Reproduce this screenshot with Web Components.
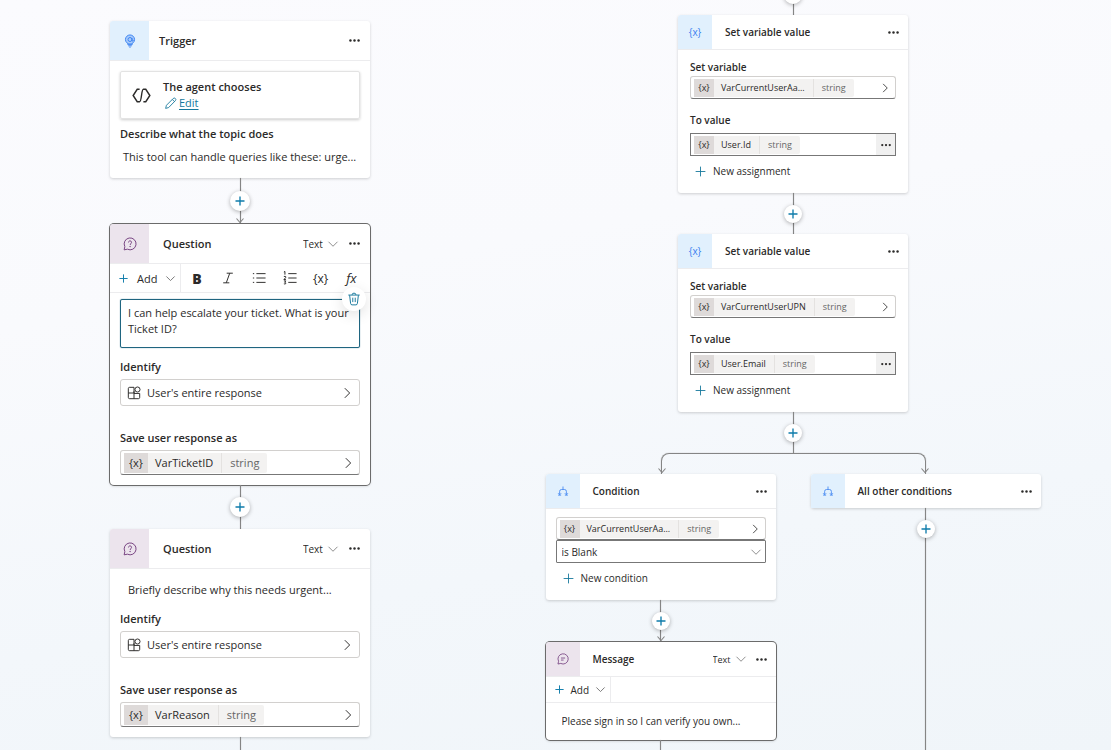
<!DOCTYPE html>
<html lang="en">
<head>
<meta charset="utf-8">
<title>Topic flow</title>
<style>
	body {
		margin: 0;
		font-family: "Open Sans", "Noto Sans", sans-serif;
		color: #2b2a29;
	}
</style>
</head>
<body>
<flow-canvas>
	<flow-lane>
		<flow-card icon="trigger" heading="Trigger">
			<agent-choice></agent-choice>
			<flow-note label="Describe what the topic does">This tool can handle queries like these: urge...</flow-note>
		</flow-card>
		<flow-connector arrow></flow-connector>
		<flow-card icon="question" heading="Question" mode="Text" tone="purple" selected>
			<format-bar slot="bar" full></format-bar>
			<message-editor text="I can help escalate your ticket. What is your Ticket ID?"></message-editor>
			<picker-field label="Identify" value="User's entire response"></picker-field>
			<variable-field label="Save user response as" name="VarTicketID" class="spaced"></variable-field>
		</flow-card>
		<flow-connector></flow-connector>
		<flow-card icon="question" heading="Question" mode="Text" tone="purple">
			<flow-note indent>Briefly describe why this needs urgent...</flow-note>
			<picker-field label="Identify" value="User's entire response"></picker-field>
			<variable-field label="Save user response as" name="VarReason" class="spaced"></variable-field>
		</flow-card>
		<flow-connector tail></flow-connector>
	</flow-lane>

	<flow-lane compact>
		<flow-connector class="cut"></flow-connector>
		<flow-card icon="variable" heading="Set variable value">
			<variable-field label="Set variable" name="VarCurrentUserAa..."></variable-field>
			<variable-field label="To value" name="User.Id" more></variable-field>
			<add-link text="New assignment"></add-link>
		</flow-card>
		<flow-connector></flow-connector>
		<flow-card icon="variable" heading="Set variable value">
			<variable-field label="Set variable" name="VarCurrentUserUPN"></variable-field>
			<variable-field label="To value" name="User.Email" more></variable-field>
			<add-link text="New assignment"></add-link>
		</flow-card>
		<flow-connector></flow-connector>
		<flow-branch>
			<flow-card slot="left" icon="branch" heading="Condition">
				<condition-row name="VarCurrentUserAa..." test="is Blank"></condition-row>
				<add-link text="New condition"></add-link>
			</flow-card>
			<flow-connector slot="left" arrow></flow-connector>
			<flow-card slot="left" icon="message" heading="Message" mode="Text" tone="purple" selected>
				<format-bar slot="bar"></format-bar>
				<flow-note indent>Please sign in so I can verify you own...</flow-note>
			</flow-card>
			<flow-connector slot="left" tail></flow-connector>
			<flow-card slot="right" icon="branch" heading="All other conditions" bare></flow-card>
			<flow-connector slot="right"></flow-connector>
			<flow-connector slot="right" tail></flow-connector>
		</flow-branch>
	</flow-lane>
</flow-canvas>

<script>
// Line icons, all stroked with currentColor
const ICONS = {
	trigger: `<svg viewBox="0 0 16 16"><circle cx="8" cy="6.3" r="5.2" fill="#a9ccfb"/><circle cx="8" cy="6.3" r="2.3"/><path d="M10.3 4.5v2.8c0 1.2 1.6 1 1.6-.6M5.500 11v1.200h5V11M6 13.500h4M7.2 15h1.6"/></svg>`,
	question: `<svg viewBox="0 0 16 16"><path d="M1.300 14.700l.8-3.700A6.800 6.800 0 1 1 5 13.900z"/><path d="M6.300 6.200c0-2.400 3.500-2.300 3.500-.1 0 1.400-1.700 1.500-1.700 3"/><circle cx="8.1" cy="10.900" r=".35"/></svg>`,
	message: `<svg viewBox="0 0 16 16"><path d="M1.300 14.700l.8-3.700A6.800 6.800 0 1 1 5 13.900z"/><path d="M5.300 6.700h5.500M5.300 9.400h3.500"/></svg>`,
	branch: `<svg viewBox="0 0 16 16"><path d="M8 2v3.500M3.500 12.500V8.500q0-2.500 2.500-2.500h4q2.500 0 2.500 2.500v4M1.500 11l2 2 2-2M10.500 11l2 2 2-2M1.500 13.500h4M10.500 13.500h4"/></svg>`,
	agent: `<svg viewBox="0 0 20 20"><path d="M8 3.500H5.500L1.200 10l4.300 6.500H8M12 3.500h2.500l4.300 6.500-4.300 6.500H12M8 16.500c2.300 0 1.700-13 4-13"/></svg>`,
	pencil: `<svg viewBox="0 0 16 16"><path d="M2 14l1-3.800 8.300-8.300a1.700 1.700 0 0 1 2.700 2.600L5.700 13zM10.200 3l2.700 2.700"/></svg>`,
	plus: `<svg viewBox="0 0 16 16"><path d="M8 2v12M2 8h12"/></svg>`,
	right: `<svg viewBox="0 0 16 16"><path d="M5.500 2.500L11 8l-5.500 5.500"/></svg>`,
	down: `<svg viewBox="0 0 16 16"><path d="M2 5l6 6 6-6"/></svg>`,
	dots: `<svg viewBox="0 0 16 16" class="solid"><circle cx="3" cy="8" r="1.500"/><circle cx="8" cy="8" r="1.500"/><circle cx="13" cy="8" r="1.500"/></svg>`,
	grid: `<svg viewBox="0 0 16 16"><path d="M8 14.500V8H1.500M8 8V1.500H3q-1.500 0-1.500 1.500v10q0 1.500 1.500 1.500h10q1.500 0 1.500-1.500V8.500H8M8 8V6"/><circle cx="12" cy="4" r="2.900"/></svg>`,
	italic: `<svg viewBox="0 0 16 16"><path d="M6.500 2.500h7M2.500 13.500h7M10 2.500l-4 11"/></svg>`,
	bullets: `<svg viewBox="0 0 16 16"><path d="M5 3h10.500M5 8h10.500M5 13h10.500M1 3h1.500M1 8h1.500M1 13h1.500"/></svg>`,
	numbers: `<svg viewBox="0 0 16 16"><path d="M6 3h9.500M6 8h9.500M6 13h9.500M1 1.200l1.200-.7v3.700M1 6.200h2v1.500l-2 2h2.300M1 11.300h2.200l-1.200 1.700q1.500.2 1.200 1.400-.8.900-2.200.2"/></svg>`,
	trash: `<svg viewBox="0 0 16 16"><path d="M1.500 3.500h13M5.800 3.300q0-2 2.200-2t2.200 2M3 3.700l1.100 9.300q.2 1.700 1.700 1.700h4.400q1.500 0 1.700-1.700L13 3.700M6.600 6.500v5M9.400 6.500v5"/></svg>`,
	arrow: `<svg viewBox="0 0 8 5"><path d="M.5.500L4 4.500 7.500.500"/></svg>`
};

const BASE = `
	:host { display: block; box-sizing: border-box; }
	*, *::before { box-sizing: border-box; }
	svg { display: block; flex: none; width: 14px; height: 14px; fill: none; stroke: currentColor; stroke-width: 1.1; }
	svg.solid { fill: currentColor; stroke: none; }
	button, select, textarea { margin: 0; padding: 0; border: 0; background: none; color: inherit; font: inherit; }
	button { display: flex; align-items: center; justify-content: center; cursor: pointer; }
	p { margin: 0; }
	.label { display: block; font-size: var(--text); line-height: var(--line); font-weight: 600; }
`;

class FlowElement extends HTMLElement {
	connectedCallback() {
		if (this.shadowRoot) return;
		const root = this.attachShadow({ mode: 'open' });
		root.innerHTML = `<style>${BASE}${this.styles()}</style>${this.markup()}`;
	}
	attr(name) {
		return this.getAttribute(name) || '';
	}
}

customElements.define('flow-canvas', class extends FlowElement {
	styles() {
		return `
		:host {
			display: grid;
			grid-template-columns: 480fr 626fr;
			height: 100vh;
			padding-right: 5px;
			overflow: hidden;
			background: linear-gradient(170deg, #fbfbfe 0%, #f9fafd 35%, #f3f7fb 70%, #f0f5f9 100%);
		}`;
	}
	markup() {
		return `<slot></slot>`;
	}
});

// Sizes for everything in a lane are set here and inherited by its cards
customElements.define('flow-lane', class extends FlowElement {
	styles() {
		return `
		:host {
			--text: 11px; --small: 10px; --chip-text: 11px; --line: 16px; --tile: 39px; --card: 260px;
			--inset: 10px; --bottom: 10px; --link: 44px; --arrow-link: 46px; --knob: 20px; --chip: 24px; --row: 25px;
			--gap: 4px; --icon: 14px; --bar: 28px; --bar-gap: 8px; --title: 14px; --end: 9px; --note: 3px 0 2px 8px;
			display: flex;
			flex-direction: column;
			align-items: center;
			min-height: 0;
			padding-top: 21px;
		}
		:host([compact]) {
			--text: 10px; --small: 9px; --chip-text: 9px; --line: 14px; --tile: 34px; --card: 230px;
			--inset: 12px; --bottom: 11px; --link: 41px; --arrow-link: 42px; --knob: 18px; --chip: 20px; --row: 23px;
			--gap: 2px; --icon: 12px; --bar: 25px; --bar-gap: 6px; --title: 13px; --end: 8px; --note: 1px 0 1px 4px;
			padding-top: 0;
		}
		::slotted(flow-card) { width: var(--card); }
		::slotted(.cut) { margin-top: -26px; }`;
	}
	markup() {
		return `<slot></slot>`;
	}
});

customElements.define('flow-card', class extends FlowElement {
	styles() {
		return `
		:host {
			flex: none;
			border-radius: 3px;
			background: #fff;
			box-shadow: 0 1px 3px rgba(0, 0, 0, .18);
		}
		:host([selected]) { box-shadow: 0 0 0 1px #6b6b6b, 0 1px 3px rgba(0, 0, 0, .2); border-radius: 4px; }
		header {
			display: flex;
			align-items: center;
			border-bottom: 1px solid #ececee;
			padding-right: var(--end);
		}
		:host([bare]) header { border: 0; }
		.tile {
			display: flex;
			align-items: center;
			justify-content: center;
			width: var(--tile);
			height: var(--tile);
			border-radius: 3px 0 0 0;
			background: #e1f0fd;
			color: #3b82f0;
			font-size: var(--text);
		}
		:host([tone=purple]) .tile { background: #ece4ed; color: #75407f; }
		.tile svg { width: var(--icon); height: var(--icon); }
		h2 { flex: 1; margin: 0 0 0 var(--title); font-size: var(--text); line-height: var(--line); font-weight: 600; }
		:host([icon=trigger]) h2 { margin-left: 10px; }
		.mode { display: grid; align-items: center; margin-right: var(--end); font-size: var(--small); }
		.mode select { grid-area: 1 / 1; appearance: none; padding-right: 16px; }
		.mode svg { grid-area: 1 / 1; justify-self: end; width: 12px; height: 12px; color: #777; pointer-events: none; }
		.dots svg { width: 13px; height: 13px; }
		.body { display: flex; flex-direction: column; padding: 10px var(--inset) var(--bottom); }
		:host([bare]) .body { display: none; }`;
	}
	markup() {
		const icon = this.attr('icon');
		const mode = this.attr('mode');
		return `
		<header>
			<span class="tile">${ICONS[icon] || '{x}'}</span>
			<h2>${this.attr('heading')}</h2>
			${mode ? `<span class="mode"><select aria-label="Response type"><option>${mode}</option></select>${ICONS.down}</span>` : ''}
			<button class="dots" aria-label="More options">${ICONS.dots}</button>
		</header>
		<slot name="bar"></slot>
		<div class="body"><slot></slot></div>`;
	}
});

customElements.define('flow-connector', class extends FlowElement {
	styles() {
		return `
		:host { display: grid; flex: none; justify-items: center; align-items: center; height: var(--link); color: #858585; }
		:host([arrow]) { height: var(--arrow-link); }
		:host([tail]) { flex: 1; height: auto; min-height: 0; }
		.line { grid-area: 1 / 1; align-self: stretch; width: 1px; background: currentColor; box-shadow: 0 0 1px #999; }
		.head { grid-area: 1 / 1; align-self: end; }
		.head svg { width: 8px; height: 5px; margin-bottom: 1px; }
		.knob {
			grid-area: 1 / 1;
			z-index: 1;
			width: var(--knob);
			height: var(--knob);
			border-radius: 50%;
			background: #fff;
			color: #0f7cab;
			box-shadow: 0 1px 4px rgba(0, 0, 0, .3);
		}
		.knob svg { width: 12px; height: 12px; stroke-width: 1.8; }`;
	}
	markup() {
		const knob = this.hasAttribute('tail') ? '' : `<button class="knob" aria-label="Add node">${ICONS.plus}</button>`;
		const head = this.hasAttribute('arrow') ? `<span class="head">${ICONS.arrow}</span>` : '';
		return `<span class="line"></span>${head}${knob}`;
	}
});

customElements.define('flow-branch', class extends FlowElement {
	styles() {
		return `
		:host { display: flex; flex-direction: column; flex: 1; min-height: 0; }
		.rail {
			display: flex;
			flex: none;
			justify-content: space-between;
			align-items: flex-end;
			height: 21px;
			margin: 0 calc(var(--card) / 2);
			border: 1px solid #858585;
			border-bottom: 0;
			border-radius: 8px 8px 0 0;
			color: #858585;
			box-shadow: 0 0 1px #999;
			clip-path: inset(-2px -6px 0);
		}
		.rail svg { width: 8px; height: 5px; margin: 0 -4px 1px; }
		.arms { display: flex; flex: 1; gap: 35px; min-height: 0; }
		.arm { display: flex; flex-direction: column; width: var(--card); }`;
	}
	markup() {
		return `
		<div class="rail">${ICONS.arrow}${ICONS.arrow}</div>
		<div class="arms">
			<div class="arm"><slot name="left"></slot></div>
			<div class="arm"><slot name="right"></slot></div>
		</div>`;
	}
});

customElements.define('agent-choice', class extends FlowElement {
	styles() {
		return `
		:host {
			display: flex;
			align-items: center;
			gap: 12px;
			height: 48px;
			padding-left: 11px;
			border: 1px solid #e3e3e3;
			border-radius: 2px;
			box-shadow: 0 1px 3px rgba(0, 0, 0, .2);
		}
		.mark svg { width: 19px; height: 19px; stroke-width: 1.5; }
		.edit { display: flex; align-items: center; gap: 2px; padding-left: 1px; color: #16789c; font-size: var(--text); line-height: 16px; }
		.edit svg { width: 13px; height: 13px; }
		a { color: inherit; text-underline-offset: 2px; }`;
	}
	markup() {
		return `
		<span class="mark">${ICONS.agent}</span>
		<div>
			<span class="label">The agent chooses</span>
			<span class="edit">${ICONS.pencil}<a href="#edit">Edit</a></span>
		</div>`;
	}
});

customElements.define('flow-note', class extends FlowElement {
	styles() {
		return `
		:host { font-size: var(--text); line-height: var(--line); }
		:host([label]) { padding: 7px 0 3px; }
		:host([indent]) { padding: var(--note); }
		:host([slot]) { padding: 0; }
		.label { margin-bottom: 7px; }
		:host([label]) p { padding-left: 3px; }
		p { overflow: hidden; white-space: nowrap; }`;
	}
	markup() {
		const label = this.attr('label');
		return `${label ? `<span class="label">${label}</span>` : ''}<p><slot></slot></p>`;
	}
});

customElements.define('format-bar', class extends FlowElement {
	styles() {
		return `
		:host { display: flex; align-items: center; height: calc(var(--bar) + 1px); border-bottom: 1px solid #ececee; font-size: var(--text); }
		.add { gap: var(--bar-gap); height: 100%; padding: 0 4px 0 8px; border-right: 1px solid #ececee; }
		.add .plus { color: #0f7cab; }
		.add svg { width: 11px; height: 11px; stroke-width: 1.4; }
		.add .down { color: #777; }
		.tools { display: flex; flex: 1; justify-content: space-between; padding: 0 11px 0 8px; }
		.tools button { width: 15px; font-size: 12px; }
		.tools .bold { font-size: 14px; font-weight: 800; }
		.tools .fx { font-style: italic; font-size: 13px; }`;
	}
	markup() {
		const tools = `
		<div class="tools">
			<button class="bold" aria-label="Bold">B</button>
			<button aria-label="Italic">${ICONS.italic}</button>
			<button aria-label="Bulleted list">${ICONS.bullets}</button>
			<button aria-label="Numbered list">${ICONS.numbers}</button>
			<button aria-label="Insert variable">{x}</button>
			<button class="fx" aria-label="Insert formula">fx</button>
		</div>`;
		return `
		<button class="add"><span class="plus">${ICONS.plus}</span>Add<span class="down">${ICONS.down}</span></button>
		${this.hasAttribute('full') ? tools : ''}`;
	}
});

customElements.define('message-editor', class extends FlowElement {
	styles() {
		return `
		:host { position: relative; margin-top: -4px; }
		textarea {
			display: block;
			width: 100%;
			height: 49px;
			padding: 5px 7px;
			border: 1px solid #1f6580;
			border-radius: 2px;
			box-shadow: 0 0 1px #1f6580;
			outline: 0;
			resize: none;
			overflow: hidden;
			font-size: var(--text);
			line-height: var(--line);
		}
		/* floats over the corner of the box */
		.trash {
			position: absolute;
			top: -12px;
			right: -6px;
			width: 24px;
			height: 24px;
			border-radius: 50%;
			background: #fff;
			color: #16789c;
			box-shadow: 0 4px 14px rgba(0, 0, 0, .12);
		}`;
	}
	markup() {
		return `
		<textarea aria-label="Message">${this.attr('text')}</textarea>
		<button class="trash" aria-label="Delete">${ICONS.trash}</button>`;
	}
});

customElements.define('picker-field', class extends FlowElement {
	styles() {
		return `
		:host { margin-top: 11px; }
		button {
			justify-content: flex-start;
			gap: 6px;
			width: 100%;
			height: 27px;
			margin-top: var(--gap);
			padding: 0 5px 0 6px;
			border: 1px solid #d2d0ce;
			border-radius: 3px;
			font-size: var(--text);
		}
		.value { flex: 1; text-align: left; }`;
	}
	markup() {
		return `
		<label class="label" for="pick">${this.attr('label')}</label>
		<button id="pick">${ICONS.grid}<span class="value">${this.attr('value')}</span>${ICONS.right}</button>`;
	}
});

const CHIP = `
	.chip { display: flex; align-items: stretch; height: calc(var(--row) - 5px); border-radius: 2px; background: #f3f2f1; font-size: var(--chip-text); line-height: calc(var(--row) - 5px); }
	.chip .x { width: var(--chip); background: #dedad9; text-align: center; }
	.chip .name { padding: 0 8px 0 7px; }
	.chip .type { padding: 0 8px; border-left: 1px solid #e4e2e0; color: #666; }
	.box {
		justify-content: space-between;
		display: flex;
		align-items: center;
		width: 100%;
		height: var(--row);
		padding: 0 4px 0 3px;
		border: 1px solid #d2d0ce;
		border-bottom: 1px solid #777;
		border-radius: 3px;
	}
	.box > svg { width: var(--icon); height: var(--icon); }
`;

function chip(name) {
	return `<span class="chip"><span class="x">{x}</span><span class="name">${name}</span><span class="type">string</span></span>`;
}

customElements.define('variable-field', class extends FlowElement {
	styles() {
		return `${CHIP}
		.box { margin-top: var(--gap); }
		:host(.spaced) { margin-top: 24px; }
		:host([more]) { margin-top: 14px; }
		:host([more]) .box { margin-top: 6px; padding-right: 0; border-color: #777; border-radius: 0; }
		.more { width: 19px; height: 100%; background: #f0f0f0; }
		.more svg { width: 12px; height: 12px; }`;
	}
	markup() {
		const label = this.attr('label');
		if (this.hasAttribute('more')) {
			return `
			<span class="label" id="name">${label}</span>
			<div class="box" role="group" aria-labelledby="name">${chip(this.attr('name'))}<button class="more" aria-label="Edit value">${ICONS.dots}</button></div>`;
		}
		return `
		<label class="label" for="var">${label}</label>
		<button class="box" id="var">${chip(this.attr('name'))}${ICONS.right}</button>`;
	}
});

customElements.define('condition-row', class extends FlowElement {
	styles() {
		return `${CHIP}
		:host { margin: -2px -2px 0; }
		.test { display: grid; align-items: center; font-size: var(--text); }
		.test select { grid-area: 1 / 1; appearance: none; width: 100%; height: var(--row); padding: 0 5px; border: 1px solid #777; border-radius: 1px; }
		.test svg { grid-area: 1 / 1; justify-self: end; width: 12px; height: 12px; margin-right: 4px; color: #777; pointer-events: none; }`;
	}
	markup() {
		return `
		<button class="box" aria-label="Variable">${chip(this.attr('name'))}${ICONS.right}</button>
		<div class="test"><select aria-label="Operator"><option>${this.attr('test')}</option></select>${ICONS.down}</div>`;
	}
});

customElements.define('add-link', class extends FlowElement {
	styles() {
		return `
		:host { padding: 8px 0 4px 4px; }
		button { gap: 6px; font-size: var(--text); line-height: var(--line); }
		svg { width: 13px; height: 13px; color: #16789c; }`;
	}
	markup() {
		return `<button>${ICONS.plus}${this.attr('text')}</button>`;
	}
});
</script>
</body>
</html>
